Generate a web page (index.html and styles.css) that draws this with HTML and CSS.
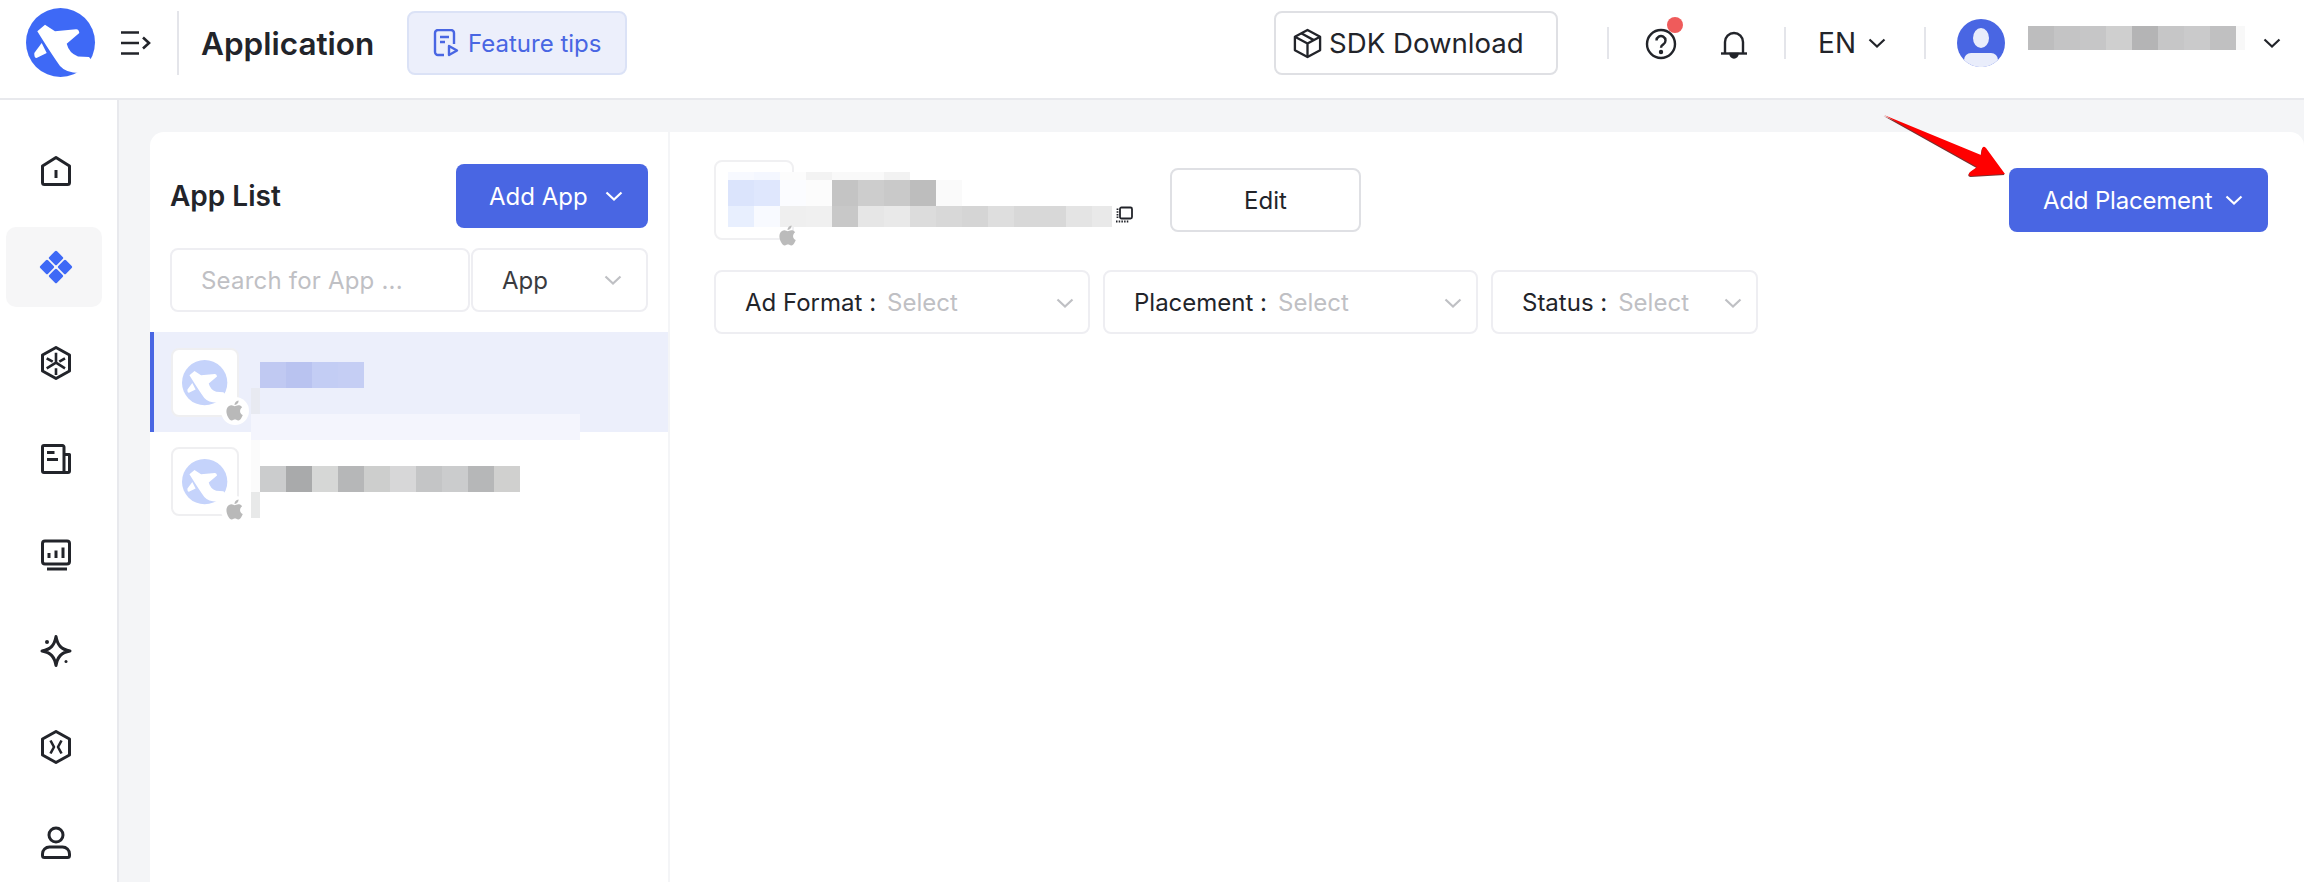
FILE: index.html
```html
<!DOCTYPE html>
<html>
<head>
  <title>Application</title>
  <link rel="stylesheet" href="styles.css">
</head>
<body>

<svg class="sprites" width="0" height="0">
  <symbol id="brand" viewBox="0 0 70 70">
    <circle cx="34.5" cy="34.5" r="34.5" fill="currentColor"/>
    <path fill="#fff" d="M11.3 23.3 19 16.7 29 23.3 50 21.2Q53 21 53.3 25L40.7 35.7Q43 45 52 48.5L63 49 72 60 60 72 53.3 65Q40 65 34 58 26 47 11.3 23.3Z"/>
    <path fill="#fff" d="M15.7 35 8.3 45Q8 50 10.5 50L20.7 45Z"/>
  </symbol>
  <symbol id="apple" viewBox="0 0 24 24">
    <path fill="currentColor" d="M17.05 12.04c-.03-2.53 2.07-3.75 2.16-3.81-1.18-1.72-3.01-1.96-3.66-1.98-1.56-.16-3.04.92-3.83.92-.79 0-2.01-.9-3.3-.87-1.7.02-3.27.99-4.14 2.51-1.77 3.06-.45 7.6 1.27 10.08.84 1.22 1.84 2.58 3.16 2.53 1.27-.05 1.75-.82 3.28-.82 1.53 0 1.96.82 3.3.79 1.36-.02 2.22-1.24 3.06-2.46.96-1.41 1.36-2.78 1.38-2.85-.03-.01-2.65-1.02-2.68-4.04zM14.53 4.6c.7-.85 1.17-2.03 1.04-3.2-1.01.04-2.23.67-2.95 1.52-.65.75-1.21 1.95-1.06 3.1 1.12.09 2.27-.57 2.97-1.42z"/>
  </symbol>
  <symbol id="chevron" viewBox="0 0 18 10">
    <path d="M1.5 1.5 9 8.5 16.5 1.5" fill="none" stroke="currentColor" stroke-width="2.2"/>
  </symbol>
</svg>

<header class="topbar">
  <svg class="logo"><use href="#brand"/></svg>
  <svg class="menu-toggle" viewBox="0 0 30 24" fill="none" stroke="#22242a" stroke-width="2.6">
    <path d="M0 1.500H18M0 12H18M0 22.500H18M22 6.500 28 12 22 17.500"/>
  </svg>
  <span class="topbar-rule"></span>
  <h1 class="page-title">Application</h1>
  <button class="tips-btn">
    <svg viewBox="0 0 26 28" fill="none" stroke="#4966e3" stroke-width="2.4">
      <path d="M11 26H5a3 3 0 0 1-3-3V4a3 3 0 0 1 3-3h13a3 3 0 0 1 3 3v11"/>
      <path d="M7 8H16M7 13H12"/>
      <path d="M16 17 24 21.5 16 26Z" stroke-linejoin="round"/>
    </svg>
    Feature tips
  </button>

  <div class="topbar-right">
    <button class="sdk-btn">
      <svg viewBox="0 0 32 32" fill="none" stroke="#22242a" stroke-width="2.4" stroke-linejoin="round">
        <path d="M16 2 29 9V23L16 30 3 23V9Z"/>
        <path d="M3 9 16 16 29 9M16 16V30M9.5 5.5 22.5 12.5"/>
      </svg>
      SDK Download
    </button>
    <span class="short-rule rule-a"></span>
    <span class="help-icon">
      <svg viewBox="0 0 32 32" fill="none" stroke="#22242a" stroke-width="2.4">
        <circle cx="16" cy="16" r="14"/>
        <path d="M11.5 12.5a4.5 4.5 0 1 1 6.8 3.9c-1.5.9-2.3 1.7-2.3 3.4"/>
        <circle cx="16" cy="24" r="1" fill="#22242a"/>
      </svg>
      <i class="red-dot"></i>
    </span>
    <svg class="bell-icon" viewBox="0 0 28 30" fill="none" stroke="#22242a" stroke-width="2.4">
      <path d="M5 23V12a9 9 0 0 1 18 0v11"/>
      <path d="M1 23.5H27"/>
      <path d="M10.5 24a3.5 3.5 0 0 0 7 0Z" fill="#22242a"/>
    </svg>
    <span class="short-rule rule-b"></span>
    <span class="lang">EN</span>
    <svg class="chev lang-chev"><use href="#chevron"/></svg>
    <span class="short-rule rule-c"></span>
    <svg class="avatar" viewBox="0 0 48 48">
      <circle cx="24" cy="24" r="24" fill="#4966e3"/>
      <ellipse cx="24" cy="19" rx="8" ry="10" fill="#e9edfb"/>
      <path d="M7 41a7 7 0 0 1 7-7h20a7 7 0 0 1 7 7 24 24 0 0 1-34 0Z" fill="#e9edfb"/>
    </svg>
    <span class="mosaic user-mosaic"></span>
    <svg class="chev user-chev"><use href="#chevron"/></svg>
  </div>
</header>

<div class="layout">
  <nav class="sidenav">
    <a class="nav-item">
      <svg viewBox="0 0 34 34" fill="none" stroke="#22242a" stroke-width="3" stroke-linejoin="round">
        <path d="M17 3.500 30.500 12V28.500a2 2 0 0 1-2 2H5.500a2 2 0 0 1-2-2V12Z"/>
        <path d="M17 16V24"/>
      </svg>
    </a>
    <a class="nav-item active">
      <svg viewBox="0 0 34 34" fill="#3e69f6">
        <rect x="11.500" y="2.500" width="11" height="11" rx="1.500" transform="rotate(45 17 8)"/>
        <rect x="11.500" y="20.500" width="11" height="11" rx="1.500" transform="rotate(45 17 26)"/>
        <rect x="2.500" y="11.500" width="11" height="11" rx="1.500" transform="rotate(45 8 17)"/>
        <rect x="20.500" y="11.500" width="11" height="11" rx="1.500" transform="rotate(45 26 17)"/>
      </svg>
    </a>
    <a class="nav-item">
      <svg viewBox="0 0 34 34" fill="none" stroke="#22242a" stroke-width="3" stroke-linejoin="round">
        <path d="M17 1.500 30.500 9V25L17 32.500 3.500 25V9Z"/>
        <path stroke-width="2.600" d="M17 6.700V15.700M17 22.300V29M7.700 12.300 13.700 15.700M26 12.300 20.300 15.700M7.700 22.300 17 16.700 26 22.300"/>
      </svg>
    </a>
    <a class="nav-item">
      <svg viewBox="0 0 34 34" fill="none" stroke="#22242a" stroke-width="3" stroke-linejoin="round">
        <path d="M25 30.500H5a1.500 1.500 0 0 1-1.500-1.500V5A1.500 1.500 0 0 1 5 3.500H23.500A1.500 1.500 0 0 1 25 5Z"/>
        <path d="M25 12.500H30.500V29a1.500 1.500 0 0 1-1.500 1.500H25"/>
        <path d="M8 10.500H15.500M8 17.500H19"/>
      </svg>
    </a>
    <a class="nav-item">
      <svg viewBox="0 0 34 34" fill="none" stroke="#22242a" stroke-width="3" stroke-linejoin="round">
        <rect x="3.500" y="3" width="27" height="23" rx="2.500"/>
        <path d="M8 31H28M10 20V15M17 20V12.500M24 20V9.500"/>
      </svg>
    </a>
    <a class="nav-item">
      <svg viewBox="0 0 34 34" fill="none" stroke="#22242a" stroke-width="3" stroke-linejoin="round">
        <path d="M17 2.500C18.500 11 22 15.500 31 17 22 18.500 18.500 23 17 31.500 15.500 23 12 18.500 3 17 12 15.500 15.500 11 17 2.500Z"/>
        <circle cx="8" cy="8" r="2" fill="#22242a" stroke="none"/>
        <circle cx="27" cy="27.500" r="1.500" fill="#22242a" stroke="none"/>
      </svg>
    </a>
    <a class="nav-item">
      <svg viewBox="0 0 34 34" fill="none" stroke="#22242a" stroke-width="3" stroke-linejoin="round">
        <path d="M17 1.500 30.500 9V25L17 32.500 3.500 25V9Z"/>
        <path stroke-width="2.600" d="M11.500 10.500 15 17 11.500 23.500M22.500 10.500 19 17 22.500 23.500"/>
      </svg>
    </a>
    <a class="nav-item">
      <svg viewBox="0 0 34 34" fill="none" stroke="#22242a" stroke-width="3">
        <circle cx="17" cy="9" r="7"/>
        <path d="M3.500 28a7 7 0 0 1 7-7H23.500a7 7 0 0 1 7 7v1.500a2 2 0 0 1-2 2H5.500a2 2 0 0 1-2-2Z"/>
      </svg>
    </a>
  </nav>

  <main class="content">
    <section class="list-panel">
      <div class="list-head">
        <h2>App List</h2>
        <button class="primary-btn add-app">Add App <svg class="chev"><use href="#chevron"/></svg></button>
      </div>
      <div class="search-row">
        <div class="search-box">Search for App ...</div>
        <div class="type-select">App <svg class="chev"><use href="#chevron"/></svg></div>
      </div>

      <div class="app-row selected">
        <div class="app-thumb">
          <svg class="thumb-logo"><use href="#brand"/></svg>
          <span class="os-badge"><svg><use href="#apple"/></svg></span>
        </div>
        <span class="mosaic m-name-a"></span>
        <span class="mosaic m-side-a"></span>
        <span class="mosaic m-sub-a"></span>
      </div>
      <div class="app-row">
        <div class="app-thumb">
          <svg class="thumb-logo"><use href="#brand"/></svg>
          <span class="os-badge"><svg><use href="#apple"/></svg></span>
        </div>
        <span class="mosaic m-top-b"></span>
        <span class="mosaic m-name-b"></span>
        <span class="mosaic m-side-b"></span>
      </div>
    </section>

    <section class="detail-panel">
      <div class="detail-head">
        <div class="detail-app">
          <div class="detail-thumb"></div>
          <span class="mosaic m-row1"></span>
          <span class="mosaic m-row2"></span>
          <span class="mosaic m-row3"></span>
          <svg class="detail-apple"><use href="#apple"/></svg>
          <svg class="copy-icon" viewBox="0 0 18 16" fill="none" stroke="#22242a">
            <rect x="5" y="1" width="12" height="11" rx="1.500" stroke-width="1.800"/>
            <path d="M2.500 2V12M1 15H14" stroke-width="1.800" stroke-dasharray="1.500 1.200"/>
          </svg>
        </div>
        <button class="edit-btn">Edit</button>
        <button class="primary-btn add-placement">Add Placement <svg class="chev"><use href="#chevron"/></svg></button>
      </div>

      <div class="filters">
        <div class="filter f-format"><span>Ad Format :</span><em>Select</em><svg class="chev"><use href="#chevron"/></svg></div>
        <div class="filter f-placement"><span>Placement :</span><em>Select</em><svg class="chev"><use href="#chevron"/></svg></div>
        <div class="filter f-status"><span>Status :</span><em>Select</em><svg class="chev"><use href="#chevron"/></svg></div>
      </div>
    </section>
  </main>
</div>

<!-- annotation arrow drawn over the screenshot -->
<svg class="arrow" viewBox="0 0 130 70">
  <path d="M4 3 101 43 102 37Q103 33 106 36L125 62 91 64Q87 63 90 60L97 55Z" fill="#7a3030" transform="translate(-.5 1)"/>
  <path d="M4 3 101 43 102 37Q103 33 106 36L125 62 91 64Q87 63 90 60L97 55Z" fill="#f00"/>
</svg>

</body>
</html>
```

FILE: styles.css
```css
* {
  box-sizing: border-box;
}

html, body {
  margin: 0;
  height: 882px;
  overflow: hidden;
}

body {
  font-family: Inter, "Noto Sans", sans-serif;
  color: #22242a;
  background-color: #fff;
}

button {
  font-family: inherit;
  cursor: pointer;
}

h1, h2 {
  margin: 0;
}

.sprites {
  position: absolute;
}

.chev {
  width: 18px;
  height: 10px;
  flex: none;
}

/* Top bar */
.topbar {
  height: 100px;
  display: flex;
  align-items: center;
  padding: 0 0 12px 26px;
  border-bottom: 2px solid #e8e9ed;
}

.logo {
  width: 70px;
  height: 70px;
  color: #3e69f6;
}

.menu-toggle {
  width: 30px;
  height: 24px;
  margin-left: 25px;
}

.topbar-rule {
  width: 2px;
  height: 64px;
  margin-left: 26px;
  background-color: #e4e5ea;
}

.page-title {
  margin-left: 22px;
  font-size: 31.5px;
  font-weight: 600;
}

.tips-btn {
  width: 220px;
  height: 64px;
  margin-left: 33px;
  display: flex;
  align-items: center;
  justify-content: center;
  gap: 9px;
  font-size: 24px;
  color: #4966e3;
  background-color: #eceffb;
  border: 2px solid #dbe2f6;
  border-radius: 8px;
}

.tips-btn svg {
  width: 26px;
  height: 28px;
}

.topbar-right {
  margin-left: auto;
  display: flex;
  align-items: center;
  padding-right: 23px;
}

.sdk-btn {
  width: 284px;
  height: 64px;
  display: flex;
  align-items: center;
  gap: 6px;
  padding: 0 0 0 16px;
  font-size: 27.6px;
  color: #22242a;
  background-color: #fff;
  border: 2px solid #dfe0e4;
  border-radius: 8px;
}

.sdk-btn svg {
  width: 31px;
  height: 31px;
}

.short-rule {
  width: 2px;
  height: 32px;
  background-color: #e4e5ea;
}

.rule-a {
  margin-left: 49px;
}

.help-icon {
  position: relative;
  width: 32px;
  height: 32px;
  margin: 2px 0 0 36px;
}

.help-icon svg {
  display: block;
}

.red-dot {
  position: absolute;
  top: -11px;
  left: 22px;
  width: 16px;
  height: 16px;
  border-radius: 50%;
  background-color: #ef5b5b;
}

.bell-icon {
  width: 28px;
  height: 30px;
  margin: 4px 0 0 43px;
}

.rule-b {
  margin-left: 36px;
}

.lang {
  margin-left: 32px;
  font-size: 28px;
}

.lang-chev {
  margin-left: 12px;
}

.rule-c {
  margin-left: 38px;
}

.avatar {
  width: 48px;
  height: 48px;
  margin-left: 31px;
}

.user-chev {
  margin-left: 18px;
}

/* Blurred-out text */
.mosaic {
  display: block;
}

.user-mosaic {
  width: 217px;
  height: 24px;
  margin: -10px 0 0 23px;
  background: linear-gradient(to right, #bdbdbe 0 26px, #c4c4c5 26px 52px, #c6c6c7 52px 78px, #cfcfcf 78px 104px, #b4b4b5 104px 130px, #c6c6c7 130px 156px, #cacacb 156px 182px, #c0c0c1 182px 208px, #f8f8f8 208px);
}

/* Page body */
.layout {
  display: flex;
  height: 782px;
}

.sidenav {
  width: 119px;
  flex: none;
  display: flex;
  flex-direction: column;
  align-items: flex-start;
  padding: 31px 0 0 6px;
  gap: 16px;
  border-right: 2px solid #e8e9ed;
}

.nav-item {
  width: 96px;
  height: 80px;
  flex: none;
  display: flex;
  align-items: center;
  justify-content: center;
  padding-left: 4px;
  border-radius: 10px;
}

.nav-item.active {
  background-color: #f6f6f7;
}

.nav-item svg {
  width: 34px;
  height: 34px;
}

.content {
  flex: 1;
  display: flex;
  gap: 2px;
  padding: 32px 0 0 31px;
  background-color: #f4f5f7;
}

.list-panel {
  width: 518px;
  flex: none;
  background-color: #fff;
  border-radius: 14px 0 0 0;
}

.list-head {
  display: flex;
  align-items: center;
  justify-content: space-between;
  padding: 32px 20px 0;
}

.list-head h2 {
  font-size: 28px;
  font-weight: 600;
}

.primary-btn {
  height: 64px;
  display: flex;
  align-items: center;
  font-size: 24px;
  color: #fff;
  background-color: #4966e3;
  border: none;
  border-radius: 8px;
}

.add-app {
  width: 192px;
  padding-left: 33px;
  gap: 17px;
}

.search-row {
  display: flex;
  gap: 1px;
  margin: 20px 20px 20px;
}

.search-box,
.type-select,
.filter {
  height: 64px;
  display: flex;
  align-items: center;
  font-size: 24px;
  background-color: #fff;
  border: 2px solid #eeeef2;
  border-radius: 8px;
}

.search-box {
  width: 300px;
  padding-left: 29px;
  color: #bfc0c4;
  letter-spacing: 0.2px;
}

.type-select {
  flex: 1;
  justify-content: space-between;
  padding: 0 24px 0 29px;
  color: #3a3b40;
}

.type-select .chev,
.filter .chev {
  color: #bfc0c4;
}

.app-row {
  position: relative;
  height: 100px;
  padding: 15px 0 0 21px;
}

.app-row.selected {
  padding: 16px 0 0 17px;
  background-color: #eceffb;
  border-left: 4px solid #4966e3;
}

.app-thumb {
  position: relative;
  width: 68px;
  height: 69px;
  display: flex;
  align-items: center;
  justify-content: center;
  background-color: #fff;
  border: 2px solid #efeff1;
  border-radius: 8px;
}

.thumb-logo {
  width: 46px;
  height: 46px;
  color: #c5d3fb;
}

.os-badge {
  position: absolute;
  right: -12px;
  bottom: -10px;
  width: 28px;
  height: 28px;
  display: flex;
  align-items: center;
  justify-content: center;
  color: #b9b9b9;
  background-color: #fff;
  border-radius: 50%;
}

.os-badge svg {
  width: 24px;
  height: 24px;
}

.app-row .mosaic {
  position: absolute;
}

.m-name-a {
  left: 106px;
  top: 30px;
  width: 104px;
  height: 26px;
  background: linear-gradient(to right, #c0c9f2 0 26px, #b9c3f0 26px 52px, #c3cdf4 52px 78px, #c5cef4 78px);
}

.m-side-a {
  left: 97px;
  top: 56px;
  width: 9px;
  height: 26px;
  background-color: #e8eaf1;
}

.m-sub-a {
  left: 97px;
  top: 82px;
  width: 329px;
  height: 26px;
  background-color: #f4f5fd;
}

.m-top-b {
  left: 101px;
  top: 8px;
  width: 9px;
  height: 52px;
  background-color: #fbfbfb;
}

.m-name-b {
  left: 110px;
  top: 34px;
  width: 260px;
  height: 26px;
  background: linear-gradient(to right, #cbcccd 0 26px, #a9aaab 26px 52px, #d6d7d6 52px 78px, #b6b7b8 78px 104px, #cdcecd 104px 130px, #d7d7d8 130px 156px, #c4c5c6 156px 182px, #cbcccd 182px 208px, #b6b7b8 208px 234px, #d0d0cf 234px);
}

.m-side-b {
  left: 101px;
  top: 60px;
  width: 9px;
  height: 26px;
  background-color: #e8e9e9;
}

/* Right side */
.detail-panel {
  flex: 1;
  padding: 28px 36px 0 44px;
  background-color: #fff;
  border-radius: 0 14px 0 0;
}

.detail-head {
  display: flex;
  align-items: flex-start;
}

.detail-app {
  position: relative;
  width: 456px;
  height: 80px;
}

.detail-thumb {
  width: 80px;
  height: 80px;
  border: 2px solid #f0f0f2;
  border-radius: 8px;
}

.detail-app .mosaic {
  position: absolute;
  left: 14px;
}

.m-row1 {
  top: 12px;
  width: 182px;
  height: 8px;
  background: linear-gradient(to right, #f7f9ff 0 26px, #f4f7ff 26px 52px, #fcfcfc 52px 78px, #f3f3f3 78px 104px, #f9f9f9 104px 156px, #f2f2f2 156px);
}

.m-row2 {
  top: 20px;
  width: 234px;
  height: 26px;
  background: linear-gradient(to right, #dbe4fc 0 26px, #dfe7fd 26px 52px, #fbfcff 52px 78px, #fcfcfc 78px 104px, #c4c4c4 104px 130px, #cdcdcd 130px 156px, #c9c9c9 156px 182px, #bdbdbd 182px 208px, #fafafa 208px);
}

.m-row3 {
  top: 46px;
  width: 384px;
  height: 21px;
  background: linear-gradient(to right, #e8effe 0 26px, #f8faff 26px 52px, #efefef 52px 78px, #f0f0f0 78px 104px, #c8c8c8 104px 130px, #e6e6e6 130px 156px, #e9e9e9 156px 182px, #dcdcdc 182px 208px, #d8d8d8 208px 234px, #d5d5d5 234px 260px, #dedede 260px 286px, #d8d8d8 286px 338px, #e4e4e4 338px 364px, #e9e9e9 364px);
}

.detail-apple {
  position: absolute;
  left: 62px;
  top: 64px;
  width: 24px;
  height: 24px;
  color: #bbb;
}

.copy-icon {
  position: absolute;
  left: 401px;
  top: 46px;
  width: 18px;
  height: 17px;
}

.edit-btn {
  width: 191px;
  height: 64px;
  margin-top: 8px;
  font-size: 24px;
  color: #22242a;
  background-color: #fff;
  border: 2px solid #dfe0e4;
  border-radius: 8px;
}

.add-placement {
  width: 259px;
  margin: 8px 0 0 auto;
  padding-left: 34px;
  gap: 13px;
  letter-spacing: -0.2px;
}

.filters {
  display: flex;
  gap: 13px;
  margin-top: 30px;
}

.filter {
  position: relative;
  padding-left: 29px;
}

.filter em {
  font-style: normal;
  color: #bfc0c4;
  margin-left: 11px;
}

.filter .chev {
  position: absolute;
  right: 14px;
  top: 26px;
}

.f-format {
  width: 376px;
}

.f-placement {
  width: 375px;
}

.f-status {
  width: 267px;
}

.arrow {
  position: absolute;
  left: 1880px;
  top: 112px;
  width: 130px;
  height: 70px;
}
```
